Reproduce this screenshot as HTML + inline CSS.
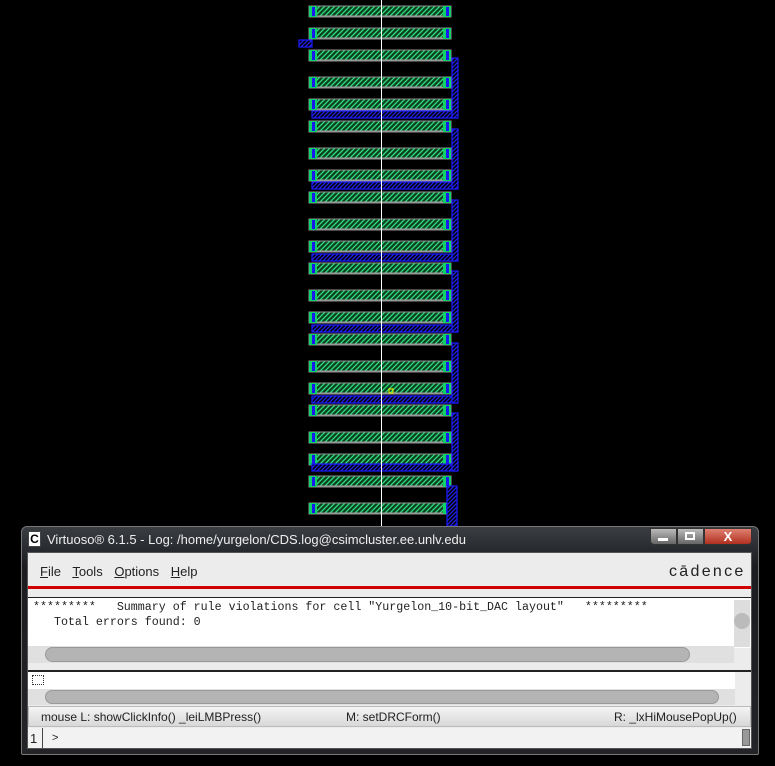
<!DOCTYPE html>
<html><head><meta charset="utf-8"><style>
*{margin:0;padding:0;box-sizing:border-box}
body{width:775px;height:766px;background:#000;position:relative;overflow:hidden;font-family:"Liberation Sans",sans-serif}
.abs{position:absolute}
.mono{font-family:"Liberation Mono",monospace;font-size:11.65px;color:#222;line-height:15px}
.sb{background:#b4b4b4;border-radius:8px;border:1px solid #999}
</style></head><body>
<svg class="abs" style="left:0;top:0" width="775" height="766">
<defs>
<pattern id="h" width="5" height="5" patternUnits="userSpaceOnUse"><rect width="5" height="5" fill="#0d4020"/><path d="M0 5L5 0M-1 1L1 -1M4 6L6 4" stroke="#30e080" stroke-width="1.3"/></pattern>
<pattern id="b" width="4" height="4" patternUnits="userSpaceOnUse"><rect width="4" height="4" fill="#000"/><path d="M0 4L4 0M-1 1L1 -1M3 5L5 3" stroke="#2020e8" stroke-width="1.3"/></pattern>
<g id="bar"><rect x="309" y="0" width="142" height="11" fill="url(#h)" stroke="#909090" stroke-width="1"/><rect x="309" y="0" width="8" height="11" fill="#10d068"/><rect x="443" y="0" width="8" height="11" fill="#10d068"/><rect x="312" y="1" width="3" height="9" fill="#1a1af0"/><rect x="446" y="1" width="3" height="9" fill="#1a1af0"/><line x1="317" y1="10" x2="443" y2="10" stroke="#a0a0a0"/></g>
</defs>
<g>
<use href="#bar" y="6"/><use href="#bar" y="28"/><use href="#bar" y="50"/>
<use href="#bar" y="77"/><use href="#bar" y="99"/><use href="#bar" y="121"/>
<use href="#bar" y="148"/><use href="#bar" y="170"/><use href="#bar" y="192"/>
<use href="#bar" y="219"/><use href="#bar" y="241"/><use href="#bar" y="263"/>
<use href="#bar" y="290"/><use href="#bar" y="312"/><use href="#bar" y="334"/>
<use href="#bar" y="361"/><use href="#bar" y="383"/><use href="#bar" y="405"/>
<use href="#bar" y="432"/><use href="#bar" y="454"/><use href="#bar" y="476"/>
<use href="#bar" y="503"/>
</g>
<g fill="url(#b)" stroke="#1a1aff" stroke-width="1.2">
<rect x="299" y="40" width="13" height="7"/>
<rect x="312" y="111" width="145" height="7"/><rect x="452" y="58" width="6" height="60"/>
<rect x="312" y="182" width="145" height="7"/><rect x="452" y="129" width="6" height="60"/>
<rect x="312" y="254" width="145" height="7"/><rect x="452" y="200" width="6" height="61"/>
<rect x="312" y="325" width="145" height="7"/><rect x="452" y="271" width="6" height="61"/>
<rect x="312" y="396" width="145" height="7"/><rect x="452" y="343" width="6" height="60"/>
<rect x="312" y="464" width="145" height="7"/><rect x="452" y="413" width="6" height="58"/>
<rect x="447" y="486" width="10" height="40"/>
</g>
<rect x="389" y="389" width="4" height="4" fill="none" stroke="#ff0"/>
<line x1="381.5" y1="0" x2="381.5" y2="526" stroke="#fff"/>
</svg>

<div class="abs" style="left:21px;top:526px;width:738px;height:229px;background:linear-gradient(#3a3d42,#1a1c20 40px,#222428);border:1px solid #777;border-radius:6px 6px 2px 2px"></div>
<div class="abs" style="left:28px;top:531px;width:13px;height:16px;background:#fff;border:1px solid #444;font:bold 12px 'Liberation Sans';text-align:center;line-height:14px;color:#000">C</div>
<div class="abs" style="left:47px;top:532px;color:#eee;font-size:13px;white-space:nowrap">Virtuoso® 6.1.5 - Log: /home/yurgelon/CDS.log@csimcluster.ee.unlv.edu</div>
<div class="abs" style="left:650px;top:528px;width:27px;height:17px;background:linear-gradient(#bbb,#666);border:1px solid #333;border-radius:0 0 0 4px"></div>
<div class="abs" style="left:658px;top:538px;width:10px;height:3px;background:#fff"></div>
<div class="abs" style="left:677px;top:528px;width:27px;height:17px;background:linear-gradient(#bbb,#666);border:1px solid #333"></div>
<div class="abs" style="left:685px;top:532px;width:10px;height:8px;border:2px solid #fff"></div>
<div class="abs" style="left:704px;top:528px;width:48px;height:17px;background:linear-gradient(#e08070,#b03020);border:1px solid #333;border-radius:0 0 4px 0;color:#fff;font:bold 13px 'Liberation Sans';text-align:center;line-height:16px">X</div>

<div class="abs" style="left:27px;top:552px;width:725px;height:197px;background:#ececec;border:1px solid #555"></div>
<div class="abs" style="left:40px;top:564px;font-size:13px;color:#222;word-spacing:8px"><u>F</u>ile <u>T</u>ools <u>O</u>ptions <u>H</u>elp</div>
<div class="abs" style="left:669px;top:563px;font-size:16px;color:#222;letter-spacing:2.3px">cādence</div>
<div class="abs" style="left:28px;top:586px;width:723px;height:3px;background:#d00000"></div>
<div class="abs" style="left:28px;top:597px;width:723px;height:51px;background:#fff;border-top:1px solid #222"></div>
<div class="abs mono" style="left:33px;top:600px;white-space:pre">*********   Summary of rule violations for cell "Yurgelon_10-bit_DAC layout"   *********
   Total errors found: 0</div>
<div class="abs" style="left:734px;top:600px;width:16px;height:47px;background:#ddd"></div>
<div class="abs" style="left:734px;top:613px;width:16px;height:16px;background:#bbb;border-radius:8px"></div>
<div class="abs" style="left:28px;top:646px;width:706px;height:17px;background:#e0e0e0"></div>
<div class="abs sb" style="left:45px;top:647px;width:645px;height:15px"></div>
<div class="abs" style="left:28px;top:670px;width:723px;height:2px;background:#222"></div>
<div class="abs" style="left:28px;top:672px;width:707px;height:17px;background:#fff"></div>
<div class="abs" style="left:32px;top:675px;width:12px;height:10px;border:1px dotted #333"></div>
<div class="abs" style="left:28px;top:689px;width:707px;height:16px;background:#e0e0e0"></div>
<div class="abs sb" style="left:45px;top:690px;width:674px;height:14px"></div>
<div class="abs" style="left:28px;top:706px;width:723px;height:21px;background:linear-gradient(#f4f4f4,#d8d8d8);border:1px solid #bbb"></div>
<div class="abs" style="left:41px;top:710px;font-size:12px;color:#222;white-space:nowrap">mouse L: showClickInfo() _leiLMBPress()</div>
<div class="abs" style="left:346px;top:710px;font-size:12px;color:#222">M: setDRCForm()</div>
<div class="abs" style="left:614px;top:710px;font-size:12px;color:#222">R: _lxHiMousePopUp()</div>
<div class="abs" style="left:28px;top:728px;width:723px;height:20px;background:#f2f2f2"></div>
<div class="abs" style="left:30px;top:731px;font-size:13px;color:#222">1</div>
<div class="abs" style="left:42px;top:728px;width:1px;height:20px;background:#444"></div>
<div class="abs" style="left:52px;top:732px;font-size:11px;color:#222">&gt;</div>
<div class="abs" style="left:742px;top:729px;width:8px;height:17px;background:#999;border:1px solid #666"></div>
</body></html>
